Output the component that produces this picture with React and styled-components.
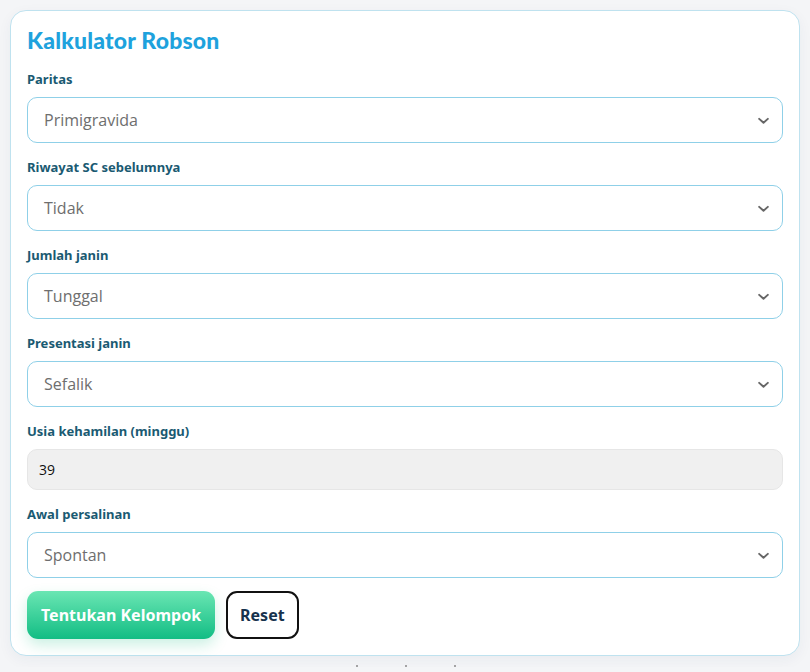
import React from "react";
import styled, { createGlobalStyle } from "styled-components";

const Global = createGlobalStyle`
  html, body { margin: 0; padding: 0; background: #f4f5f7; }
  body { font-family: "Open Sans", "Noto Sans", sans-serif; }
  * { box-sizing: border-box; }
`;

const Page = styled.div`
  padding: 10px 10px 0;
  display: flex;
  flex-direction: column;
  align-items: stretch;
`;

const Card = styled.div`
  background: #ffffff;
  border: 1px solid #bfe2ef;
  border-radius: 16px;
  padding: 16px 16px 16px;
  box-shadow: 0 4px 14px rgba(30, 60, 90, 0.05);
  display: flex;
  flex-direction: column;
`;

const Title = styled.h2`
  margin: 0 0 16px;
  font-family: "Lato", "Inter", sans-serif;
  font-weight: 900;
  font-size: 23px;
  line-height: 26px;
  color: #1ea2dd;
  letter-spacing: 0.2px;
`;

const Group = styled.div`
  display: flex;
  flex-direction: column;
  margin-bottom: ${(p) => p.$mb ?? 14}px;
`;

const Label = styled.label`
  font-family: "Noto Sans", "Open Sans", sans-serif;
  font-weight: 700;
  font-size: 13px;
  line-height: 20px;
  color: #1a5a72;
  margin-bottom: 8px;
`;

const SelectBox = styled.div`
  position: relative;
  height: 46px;
  border: 1px solid #8fd0e8;
  border-radius: 10px;
  background: #fff;
  display: flex;
  align-items: center;
  padding: 0 16px;
  font-family: "Open Sans", "Noto Sans", sans-serif;
  font-size: 16px;
  color: #6e6e6e;
`;

const SelectText = styled.span`
  flex: 1;
`;

const Chevron = styled.svg`
  width: 13px;
  height: 13px;
  margin-right: -4px;
`;

const NumberBox = styled.div`
  height: 41px;
  border: 1px solid #e6e6e6;
  border-radius: 10px;
  background: #f0f0f0;
  display: flex;
  align-items: center;
  padding: 0 11px;
  font-family: "Open Sans", "Noto Sans", sans-serif;
  font-size: 14px;
  color: #111;
`;

const Actions = styled.div`
  display: flex;
  gap: 11px;
  margin-top: -2px;
`;

const PrimaryButton = styled.button`
  height: 48px;
  padding: 0 14px;
  border: none;
  border-radius: 11px;
  background: linear-gradient(180deg, #6ae6b3 0%, #12bd84 100%);
  box-shadow: 0 6px 14px rgba(16, 185, 129, 0.22);
  color: #fff;
  font-family: "Noto Sans", "Open Sans", sans-serif;
  font-weight: 700;
  font-size: 16px;
`;

const OutlineButton = styled.button`
  height: 48px;
  padding: 0 12px;
  border: 2px solid #111;
  border-radius: 11px;
  background: #fff;
  color: #17324d;
  font-family: "Noto Sans", "Open Sans", sans-serif;
  font-weight: 700;
  font-size: 16px;
`;

const Dots = styled.div`
  display: flex;
  justify-content: center;
  gap: 47px;
  padding-top: 9px;
  padding-left: 2px;
`;

const Dot = styled.span`
  width: 2px;
  height: 2px;
  background: #888;
  border-radius: 1px;
`;

const ChevronIcon = () => (
  <Chevron viewBox="0 0 12 12" fill="none">
    <path d="M2 4.5 L6 8 L10 4.5" stroke="#666" strokeWidth="1.8" strokeLinecap="round" strokeLinejoin="round" />
  </Chevron>
);

const Select = ({ value }) => (
  <SelectBox>
    <SelectText>{value}</SelectText>
    <ChevronIcon />
  </SelectBox>
);

const fields = [
  { label: "Paritas", value: "Primigravida" },
  { label: "Riwayat SC sebelumnya", value: "Tidak" },
  { label: "Jumlah janin", value: "Tunggal" },
  { label: "Presentasi janin", value: "Sefalik" },
];

export default function App() {
  return (
    <>
      <Global />
      <Page>
        <Card>
          <Title>Kalkulator Robson</Title>
          {fields.map((f) => (
            <Group key={f.label}>
              <Label>{f.label}</Label>
              <Select value={f.value} />
            </Group>
          ))}
          <Group>
            <Label>Usia kehamilan (minggu)</Label>
            <NumberBox>39</NumberBox>
          </Group>
          <Group $mb={15}>
            <Label>Awal persalinan</Label>
            <Select value="Spontan" />
          </Group>
          <Actions>
            <PrimaryButton>Tentukan Kelompok</PrimaryButton>
            <OutlineButton>Reset</OutlineButton>
          </Actions>
        </Card>
        <Dots>
          <Dot />
          <Dot />
          <Dot />
        </Dots>
      </Page>
    </>
  );
}
